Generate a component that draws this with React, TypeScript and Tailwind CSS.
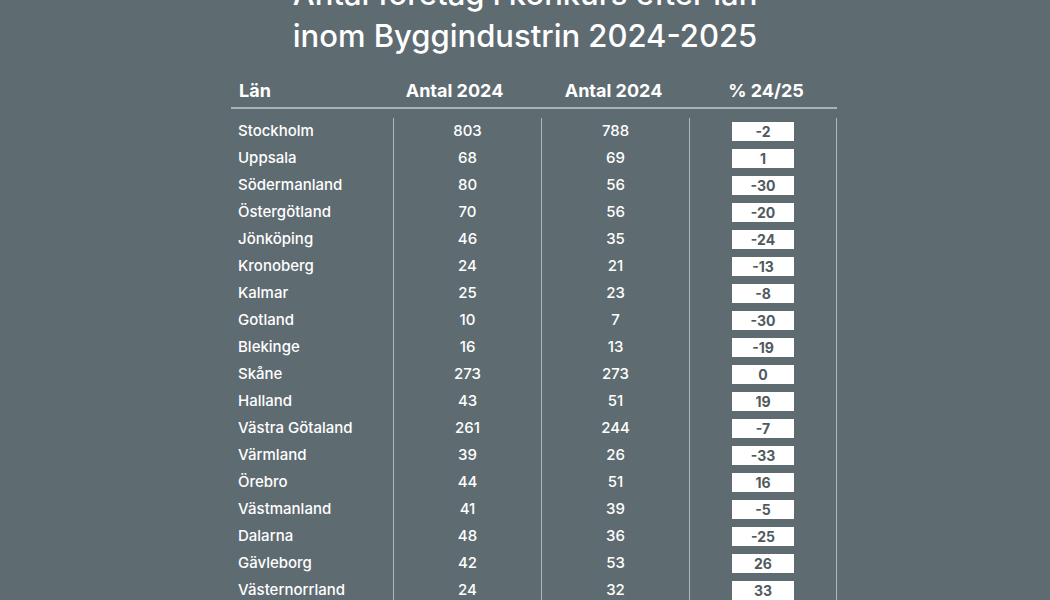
import * as React from 'react';

type Row = [string, number, number, number];

const ROWS: Row[] = [
  ['Stockholm', 803, 788, -2],
  ['Uppsala', 68, 69, 1],
  ['Södermanland', 80, 56, -30],
  ['Östergötland', 70, 56, -20],
  ['Jönköping', 46, 35, -24],
  ['Kronoberg', 24, 21, -13],
  ['Kalmar', 25, 23, -8],
  ['Gotland', 10, 7, -30],
  ['Blekinge', 16, 13, -19],
  ['Skåne', 273, 273, 0],
  ['Halland', 43, 51, 19],
  ['Västra Götaland', 261, 244, -7],
  ['Värmland', 39, 26, -33],
  ['Örebro', 44, 51, 16],
  ['Västmanland', 41, 39, -5],
  ['Dalarna', 48, 36, -25],
  ['Gävleborg', 42, 53, 26],
  ['Västernorrland', 24, 32, 33],
];

const COLS = 'grid grid-cols-[163px_148px_148px_147px]';

export default function App() {
  return (
    <div
      className="w-[1050px] h-[600px] overflow-hidden bg-[#5e6b71] text-white"
      style={{ fontFamily: 'Inter, "Liberation Sans", sans-serif' }}
    >
      <h1 className="mt-[-27px] text-center text-[31px] leading-[42px] font-medium">
        Antal företag i konkurs efter län
        <br />
        inom Byggindustrin 2024-2025
      </h1>

      <div className="ml-[231px] w-[606px]">
        <div className={`${COLS} mt-[22px] h-[30px] border-b-2 border-[#a9b3b7] text-[18px] leading-[24px] font-bold`}>
          <span className="pl-[8px]">Län</span>
          <span className="text-center pr-[27px]">Antal 2024</span>
          <span className="text-center pr-[5px]">Antal 2024</span>
          <span className="text-center pl-[5px]">% 24/25</span>
        </div>

        <div className="mt-[9px]">
          {ROWS.map(([name, a, b, pct]) => (
            <div key={name} className={`${COLS} h-[27px] text-[15px] font-medium`}>
              <div className="flex items-center pl-[7px] border-r border-[#aeb7bb]">{name}</div>
              <div className="flex items-center justify-center border-r border-[#aeb7bb]">{a}</div>
              <div className="flex items-center justify-center border-r border-[#aeb7bb]">{b}</div>
              <div className="flex items-center justify-center border-r border-[#aeb7bb]">
                <span className="w-[62px] h-[19px] bg-white text-[#4f5a60] text-[14px] font-bold leading-[19px] text-center">
                  {pct}
                </span>
              </div>
            </div>
          ))}
        </div>
      </div>
    </div>
  );
}
